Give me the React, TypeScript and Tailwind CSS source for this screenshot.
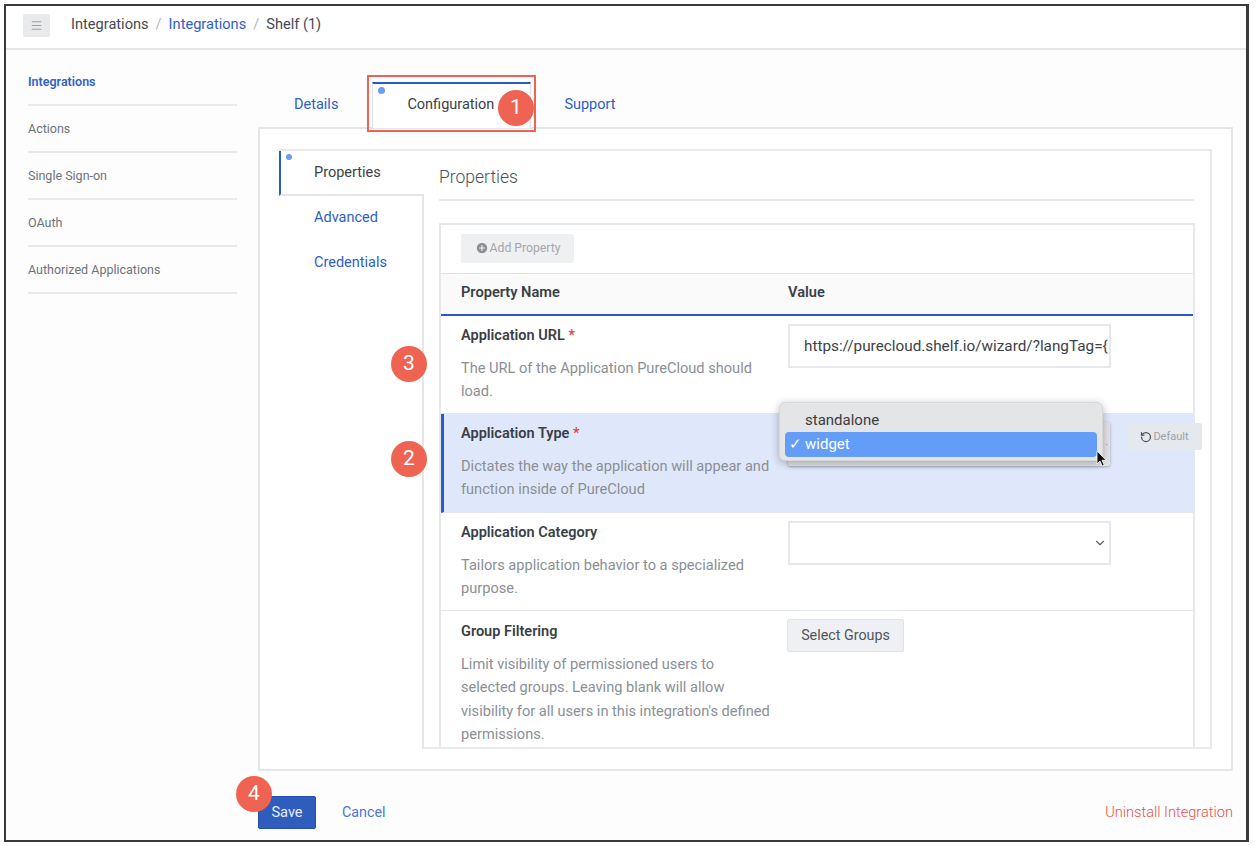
import { ChevronDown, CirclePlus, Menu, RotateCcw } from "lucide-react";

const sideItems = ["Integrations", "Actions", "Single Sign-on", "OAuth", "Authorized Applications"];

const Badge = ({ n, className }: { n: number; className: string }) => (
  <div className={`absolute flex h-[36px] w-[36px] items-center justify-center rounded-full bg-[#ee6352] text-[21px] text-white ${className}`}>
    {n}
  </div>
);

const Row = ({
  name,
  required,
  desc,
  active,
  className,
  children,
}: {
  name: string;
  required?: boolean;
  desc: string[];
  active?: boolean;
  className: string;
  children?: React.ReactNode;
}) => (
  <div className={`flex shrink-0 border-b border-[#e3e6ea] ${active ? "border-l-[3px] border-l-[#2a5bc4] bg-[#dfe7fa] pl-[17px]" : "pl-[20px]"} ${className}`}>
    <div className="w-[327px] shrink-0 pt-[9px]">
      <div className="text-[14.5px] leading-[22px] font-semibold text-[#3a3f46]">
        {name}
        {required && <span className="text-[#e8443a]"> *</span>}
      </div>
      <div className="mt-[10px] text-[14.6px] leading-[23.4px] text-[#8a8f96]">
        {desc.map((line) => (
          <div key={line} className="whitespace-nowrap">{line}</div>
        ))}
      </div>
    </div>
    {children}
  </div>
);

export default function App() {
  return (
    <div className="h-[846px] w-[1258px] overflow-hidden bg-white pt-[4px] pr-[9px] pb-[3px] pl-[4px] font-['Roboto',sans-serif]">
      <div className="relative flex h-[838px] flex-col border-2 border-r-[3px] border-[#3a3a3a] bg-white">
        {/* top bar */}
        <div className="flex h-[44px] shrink-0 items-center border-b-2 border-[#e4e6e8] pb-[4px] pl-[17px] text-[14.6px] text-[#444a52]">
          <button className="flex h-[23px] w-[27px] items-center justify-center rounded-[2px] bg-[#e9eaec] text-[#9a9fa5]">
            <Menu size={13} />
          </button>
          <span className="ml-[21px]">Integrations</span>
          <span className="mx-[7px] text-[#b5b9be]">/</span>
          <span className="text-[#2f60c5]">Integrations</span>
          <span className="mx-[7px] text-[#b5b9be]">/</span>
          <span>Shelf (1)</span>
        </div>

        <div className="flex min-h-0 flex-1 bg-[#fdfdfd]">
          {/* side nav */}
          <div className="ml-[22px] w-[209px] shrink-0 pt-[9px]">
            {sideItems.map((item, i) => (
              <div
                key={item}
                className={`flex h-[47px] items-center border-b-2 border-[#e8e9eb] pt-[2px] text-[12.5px] ${i === 0 ? "font-semibold text-[#2f60c5]" : "text-[#6e737a]"}`}
              >
                {item}
              </div>
            ))}
          </div>

          <div className="ml-[21px] flex w-[975px] shrink-0 flex-col">
            {/* top tabs */}
            <div className="relative z-10 flex h-[78px] shrink-0 items-end pl-[36px] text-[14.5px] text-[#2f60c5]">
              <span className="mb-[12px]">Details</span>
              <div className="relative ml-[34px] flex h-[46px] w-[159px] items-center justify-center border-x border-t-2 border-[#dfe1e4] border-t-[#2a5bc4] bg-white pr-[2px] pb-[3px] text-[#3c4149]">
                <span className="absolute top-[3px] left-[5px] h-[7px] w-[7px] rounded-full bg-[#6d9bf5]" />
                Configuration
              </div>
              <span className="mb-[12px] ml-[33px]">Support</span>
            </div>

            {/* outer panel */}
            <div className="-mt-[1px] flex h-[644px] shrink-0 border-2 border-[#e4e6e8] bg-white pt-[20px] pr-[19px] pb-[20px] pl-[19px]">
              <div className="flex min-w-0 flex-1 border-t-2 border-r-2 border-[#e9eaec]">
                {/* inner tabs */}
                <div className="flex w-[145px] shrink-0 flex-col text-[14.5px] text-[#2f60c5]">
                  <div className="relative flex h-[45px] shrink-0 items-center border-b-2 border-l-2 border-b-[#e4e6e8] border-l-[#2a5bc4] pl-[33px] text-[#3c4149]">
                    <span className="absolute top-[3px] left-[5px] h-[6px] w-[6px] rounded-full bg-[#6d9bf5]" />
                    Properties
                  </div>
                  <div className="flex-1 border-r-2 border-[#e4e6e8] pt-[11px] pl-[35px] leading-[22px]">
                    <div>Advanced</div>
                    <div className="mt-[23px]">Credentials</div>
                  </div>
                </div>

                {/* properties */}
                <div className="flex min-w-0 flex-1 flex-col border-b-2 border-[#e9eaec] pl-[15px]">
                  <div className="mr-[16px] flex h-[50px] shrink-0 items-center border-b-2 border-[#e8e9eb] pt-[4px] text-[17.5px] font-light text-[#4a4f56]">
                    Properties
                  </div>
                  <div className="mt-[22px] mr-[15px] flex min-h-0 flex-1 flex-col overflow-hidden border-x-2 border-t-2 border-[#e6e9ec]">
                    <div className="flex h-[49px] shrink-0 items-center border-b border-[#dfe2e6] pb-[2px] pl-[20px]">
                      <button className="flex h-[29px] w-[113px] items-center justify-center gap-[1px] rounded-[2px] bg-[#eff0f2] text-[12.2px] text-[#a3a7ad]">
                        <CirclePlus size={14} className="fill-[#8d9197] text-[#eff0f2]" />
                        Add Property
                      </button>
                    </div>
                    <div className="flex h-[42px] shrink-0 items-center border-b-2 border-[#2a5bc4] bg-[#fafafa] pb-[2px] pl-[20px] text-[14.6px] font-semibold text-[#3a3f46]">
                      <span className="w-[327px]">Property Name</span>
                      <span>Value</span>
                    </div>
                    <Row
                      name="Application URL"
                      required
                      desc={["The URL of the Application PureCloud should", "load."]}
                      className="h-[98px]"
                    >
                      <div className="mt-[8px] flex h-[44px] w-[323px] items-center overflow-hidden border-2 border-[#e6e8ec] bg-white pl-[14px] text-[15.3px] whitespace-nowrap text-[#3c4149]">
                        https://purecloud.shelf.io/wizard/?langTag={"{"}
                      </div>
                    </Row>
                    <Row
                      name="Application Type"
                      required
                      active
                      desc={["Dictates the way the application will appear and", "function inside of PureCloud"]}
                      className="h-[99px]"
                    />
                    <Row
                      name="Application Category"
                      desc={["Tailors application behavior to a specialized", "purpose."]}
                      className="h-[98px]"
                    >
                      <div className="mt-[8px] flex h-[44px] w-[323px] items-center justify-end border-2 border-[#e6e8ec] bg-white pr-[2px] text-[#5a5f66]">
                        <ChevronDown size={14} />
                      </div>
                    </Row>
                    <Row
                      name="Group Filtering"
                      desc={[
                        "Limit visibility of permissioned users to",
                        "selected groups. Leaving blank will allow",
                        "visibility for all users in this integration's defined",
                        "permissions.",
                      ]}
                      className="h-[138px] border-b-0 pt-[1px]"
                    >
                      <button className="mt-[7px] -ml-[1px] h-[33px] w-[117px] rounded-[2px] border border-[#e0e3e7] bg-[#eef0f3] text-[14.3px] text-[#50555c]">
                        Select Groups
                      </button>
                    </Row>
                  </div>
                </div>
              </div>
            </div>

            {/* footer */}
            <div className="flex flex-1 items-start pt-[25px]">
              <button className="h-[33px] w-[58px] rounded-[2px] border border-[#234fae] bg-[#2f5dbd] text-[14.6px] text-[#e6ecf9]">Save</button>
              <span className="ml-[26px] pt-[6px] text-[14.3px] text-[#4a76d4]">Cancel</span>
              <span className="ml-auto pt-[6px] text-[14.6px] font-light text-[#e9504c]">Uninstall Integration</span>
            </div>
          </div>
        </div>

        {/* select under the native popup */}
        <div className="absolute top-[416px] left-[782px] h-[44px] w-[322px] rounded-[2px] bg-[#e2e3e6] shadow-[0_1px_3px_rgba(0,0,0,0.3)]">
          <span className="absolute top-[16px] right-[2px] text-[8px] leading-none text-[#555]">ˏ</span>
        </div>
        <div className="absolute top-[417px] left-[1121px] flex h-[27px] w-[75px] items-center justify-center gap-[1px] rounded-[2px] bg-[#e5e8ed] pt-[1px] text-[11px] text-[#9da1a7]">
          <RotateCcw size={12} strokeWidth={2.5} className="text-[#4c5056]" />
          Default
        </div>

        {/* native select popup */}
        <div className="absolute top-[396px] left-[773px] h-[59px] w-[324px] rounded-[6px] border border-[#d6d7d9] bg-[#e4e5e7] px-[5px] pt-[6px] text-[15px] shadow-[0_2px_8px_rgba(0,0,0,0.28)]">
          <div className="flex h-[23px] items-center pl-[20px] text-[#3a3c40]">standalone</div>
          <div className="flex h-[25px] items-center rounded-[4px] bg-[#639df8] pl-[4px] text-white">
            <span className="w-[16px] text-[15px]">✓</span>
            widget
          </div>
        </div>
        <svg className="absolute top-[444px] left-[1090px]" width="12" height="17" viewBox="0 0 12 17">
          <path d="M1 1v13l3-3 2.2 5 2-.9L6 10.300h4.200z" fill="#111" stroke="#fff" strokeWidth="0.8" />
        </svg>

        {/* annotations */}
        <div className="absolute top-[69px] left-[361px] z-20 h-[57px] w-[169px] border-2 border-[#ee6352]" />
        <Badge n={1} className="top-[84px] left-[492px] z-30" />
        <Badge n={3} className="top-[340px] left-[385px]" />
        <Badge n={2} className="top-[435px] left-[385px]" />
        <Badge n={4} className="top-[770px] left-[230px]" />
      </div>
    </div>
  );
}
